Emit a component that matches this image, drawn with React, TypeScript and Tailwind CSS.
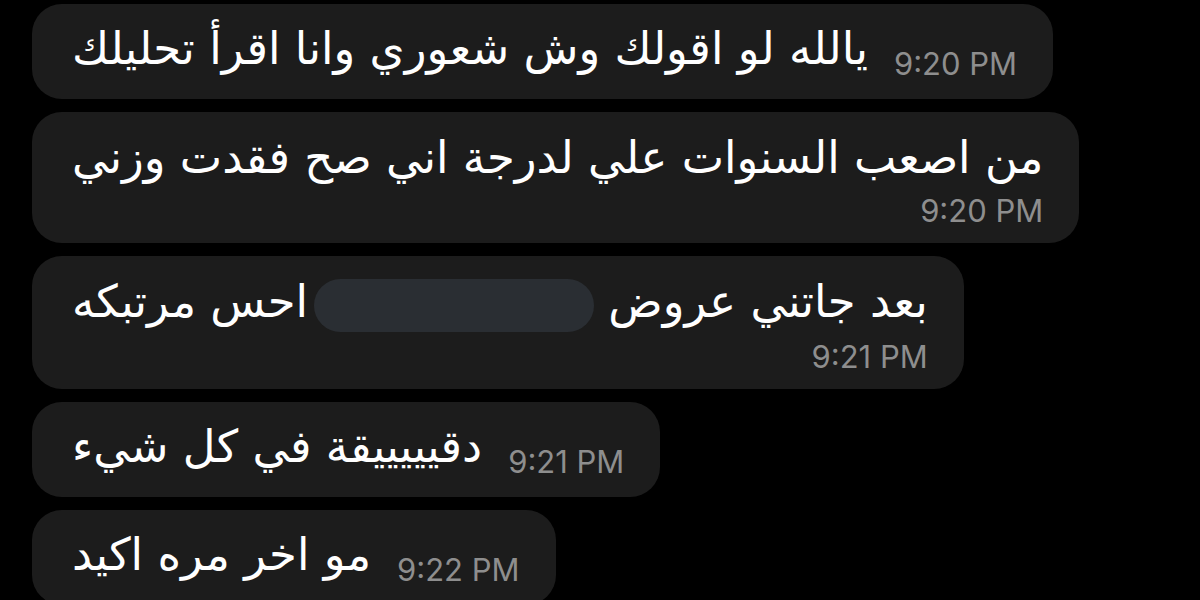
import React from 'react';

interface Message {
  id: number;
  text: React.ReactNode;
  time: string;
  stacked?: boolean;
  tail?: boolean;
}

const arabic = { fontFamily: '"DejaVu Sans", "Noto Sans", sans-serif' };
const latin = { fontFamily: 'Inter, "Liberation Sans", sans-serif' };

const messages: Message[] = [
  { id: 1, text: 'يالله لو اقولك وش شعوري وانا اقرأ تحليلك', time: '9:20 PM' },
  { id: 2, text: 'من اصعب السنوات علي لدرجة اني صح فقدت وزني', time: '9:20 PM', stacked: true },
  {
    id: 3,
    text: (
      <>
        بعد جاتني عروض{' '}
        {/* redacted part of the message */}
        <span className="inline-block w-[280px] h-[53px] ml-[6px] rounded-full bg-[#2a2e33] align-middle" />
        احس مرتبكه
      </>
    ),
    time: '9:21 PM',
    stacked: true,
  },
  { id: 4, text: 'دقيييييقة في كل شيء', time: '9:21 PM' },
  { id: 5, text: 'مو اخر مره اكيد', time: '9:22 PM', tail: true },
];

const Bubble: React.FC<{ message: Message }> = ({ message }) => {
  if (message.stacked) {
    return (
      <div className="w-fit rounded-[30px] bg-[#1c1c1c] pl-[40px] pr-[36px] pt-[18px] pb-[14px]">
        <div dir="rtl" className="text-white text-[45px] leading-[56px] whitespace-nowrap" style={arabic}>
          {message.text}
        </div>
        <div className="flex justify-end text-[#8e8e8e] text-[31px] leading-[36px] mt-[7px]" style={latin}>
          {message.time}
        </div>
      </div>
    );
  }

  return (
    <div className="relative w-fit h-[95px] rounded-[30px] bg-[#1c1c1c] pl-[40px] pr-[36px] pt-[17px] flex items-start gap-[26px]">
      <div dir="rtl" className="text-white text-[45px] leading-[56px] whitespace-nowrap" style={arabic}>
        {message.text}
      </div>
      <div className="text-[#8e8e8e] text-[31px] leading-[36px] pt-[25px]" style={latin}>
        {message.time}
      </div>
      {message.tail && (
        <div className="absolute left-0 bottom-0 w-[14px] h-[10px] bg-black rounded-tr-[10px]" />
      )}
    </div>
  );
};

export default function App() {
  return (
    <div className="w-[1200px] h-[600px] overflow-hidden bg-black">
      <div className="flex flex-col gap-[13px] pl-[32px] pt-[4px]">
        {messages.map(m => (
          <Bubble key={m.id} message={m} />
        ))}
      </div>
    </div>
  );
}
